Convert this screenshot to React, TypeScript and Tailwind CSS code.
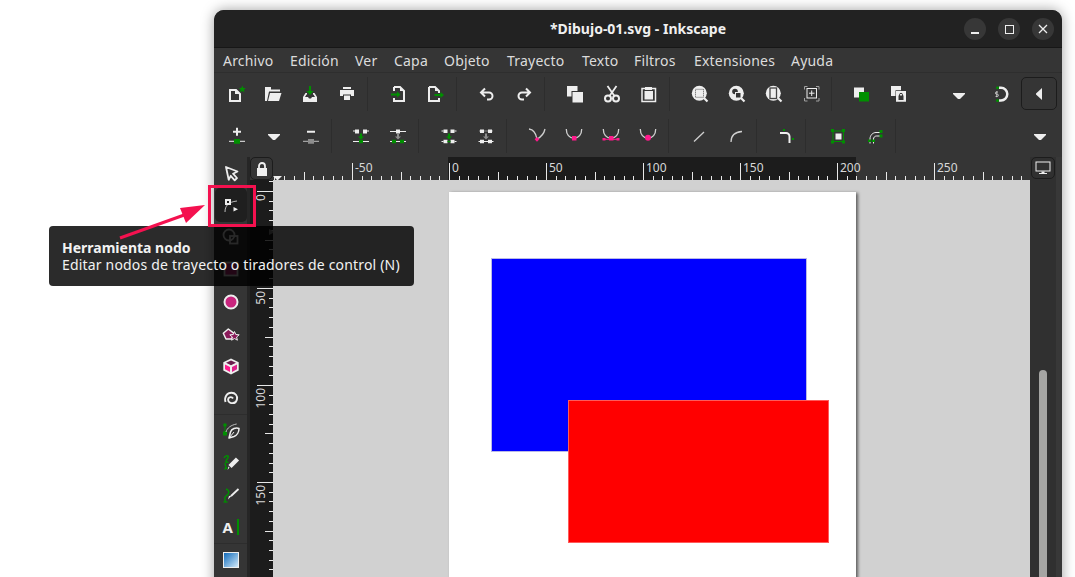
import type { ReactNode } from "react";

const G = "#008f00";
const P = "#ff1a8c";
const W = "#eeeeee";

function Ico({ children }: { children: ReactNode }) {
  return (
    <svg width="24" height="24" viewBox="0 0 24 24" fill="none" className="block shrink-0">
      {children}
    </svg>
  );
}

function Btn({ children }: { children: ReactNode }) {
  return (
    <button type="button" className="w-[37px] h-[34px] shrink-0 pl-[6px] pt-[6px] flex items-start justify-start">
      <Ico>{children}</Ico>
    </button>
  );
}

function Sep({ className }: { className: string }) {
  return (
    <div className={`h-[34px] shrink-0 pl-[1px] ${className}`}>
      <div className="w-px h-full bg-[#2d2d2d]" />
    </div>
  );
}

const Drop = () => <path d="M6 10h12v1l-5 5h-2l-5-5z" fill={W} />;

function UCurve() {
  return <path d="M4.300 5c0 5.500 3 9.300 7.700 9.300s7.700-3.800 7.700-9.300" stroke="#cfcfcf" strokeWidth="1.300" />;
}

function Lens({ children }: { children: ReactNode }) {
  return (
    <>
      <circle cx="11.3" cy="10.3" r="7.5" fill={W} />
      <path d="M16 15l3.500 3.500" stroke={W} strokeWidth="2.200" />
      {children}
    </>
  );
}

function Toolbar1() {
  return (
    <div className="h-[43px] flex items-start pt-[4px] pl-[4px] pr-[5px] bg-[#353535]">
      <Btn>
        <path d="M6 7h6l4 4v7H6z" stroke={W} strokeWidth="2" />
        <path d="M11 6l5 5h-5z" fill={W} />
        <path d="M18.300 2.500l1 2.400 2.400.2-1.800 1.700.6 2.500-2.200-1.300-2.200 1.300.6-2.500-1.800-1.700 2.400-.2z" fill={G} />
      </Btn>
      <Btn>
        <path d="M4 4h6v2.500h9v2H8l-2 9.500H4z" fill={W} />
        <path d="M9 10h11.500l-2.500 8H7z" fill={W} />
      </Btn>
      <Btn>
        <path d="M5 14l2.500-4H9v1.500h-.5L7 14h3l1 1.500h2l1-1.500h3l-1.500-2.500H15V10h1.500L19 14v5H5z" fill={W} />
        <path d="M11 3h2v5h2.500L12 12 8.500 8H11z" fill={G} />
      </Btn>
      <Btn>
        <path d="M8 4h8v2H8zM5 7h14v6h-3v-1.500H8V13H5zM9 12.500h6V17H9z" fill={W} />
      </Btn>
      <Sep className="w-[15px]" />
      <Btn>
        <path d="M7 4h6l4 4v10H7V15M7 8V4" stroke={W} strokeWidth="2" />
        <path d="M13 4l4 4h-4z" fill={W} />
        <path d="M4 10.500h6V8.500l3.500 3-3.500 3v-2H4z" fill={G} />
      </Btn>
      <Btn>
        <path d="M5 4h6l4 4v2M15 15v3H5V4" stroke={W} strokeWidth="2" />
        <path d="M11 4l4 4h-4z" fill={W} />
        <path d="M10.500 11h6V9l3.500 3-3.500 3v-2h-6z" fill={G} />
      </Btn>
      <Sep className="w-[14px]" />
      <Btn>
        <path d="M10 5.500l-4 4 4 4M6 9.500h8a3.500 3.500 0 0 1 0 7h-2" stroke={W} strokeWidth="2" />
      </Btn>
      <Btn>
        <path d="M14 5.500l4 4-4 4M18 9.500h-8a3.500 3.500 0 0 0 0 7h2" stroke={W} strokeWidth="2" />
      </Btn>
      <Sep className="w-[14px]" />
      <Btn>
        <path d="M4 3h10.500v10.500H4z" fill={W} />
        <path d="M8.500 8h12v12h-12z" fill="#353535" />
        <path d="M9.500 9h10.500v10.500H9.500z" fill={W} />
      </Btn>
      <Btn>
        <circle cx="8" cy="15.500" r="3" stroke={W} strokeWidth="2" />
        <circle cx="16" cy="15.500" r="3" stroke={W} strokeWidth="2" />
        <path d="M9.500 13L16.500 3M14.500 13L7.500 3" stroke={W} strokeWidth="1.800" />
      </Btn>
      <Btn>
        <rect x="5" y="5.500" width="13.500" height="13" stroke={W} strokeWidth="1.500" />
        <path d="M8 4h7v3H8zM7.500 8h8.500v8.500H7.500z" fill={W} />
      </Btn>
      <Sep className="w-[14px]" />
      <Btn>
        <Lens>
          <rect x="7.500" y="6.300" width="8" height="8" stroke="#555" strokeDasharray="1 1" />
        </Lens>
      </Btn>
      <Btn>
        <Lens>
          <circle cx="10" cy="8.500" r="2.800" fill="#353535" />
          <rect x="10.500" y="9.500" width="5.500" height="5.500" fill="#353535" stroke={W} />
        </Lens>
      </Btn>
      <Btn>
        <Lens>
          <rect x="8" y="5" width="6.500" height="10.500" stroke="#444" strokeWidth="1.300" />
        </Lens>
      </Btn>
      <Btn>
        <path d="M5.500 6.500v-3h3M17 3.500h3v3M20 15v3h-3M8.500 18h-3v-3" stroke="#a0a0a0" />
        <rect x="8" y="5.500" width="9.500" height="9.500" stroke={W} />
        <path d="M12.700 7.500v5.500M10 10.200h5.500" stroke={W} />
      </Btn>
      <Sep className="w-[14px]" />
      <Btn>
        <path d="M4 4.500h10v10H4z" fill={W} />
        <path d="M9 9h10v9.500H9z" fill={G} />
      </Btn>
      <Btn>
        <path d="M4 3h10v10H4z" fill={W} />
        <path d="M8.500 7.200h11v12h-11z" fill="#353535" />
        <path d="M9 8h10v10.700H9z" fill={W} />
        <path d="M11.500 12.500h5v4.500h-5z" fill="#353535" />
        <path d="M12.500 13v-1.200a1.500 1.500 0 0 1 3 0V13" stroke="#353535" />
      </Btn>
      <div className="ml-auto flex items-start">
        <div className="mr-[6px]">
          <Btn>
            <Drop />
          </Btn>
        </div>
        <Btn>
          <path d="M9 4.800h2a6.300 6.300 0 0 1 0 12.600H9" stroke={W} strokeWidth="2.500" />
          <rect x="6" y="3.300" width="3" height="3" rx="1.500" fill={G} />
          <rect x="6" y="15.900" width="3" height="3" rx="1.500" fill={G} />
          <path d="M8 9H6.500a1 1 0 0 0 0 2.200h.8a1 1 0 0 1 0 2.200H5.500M6.800 8.200v6" stroke={W} strokeWidth=".7" />
        </Btn>
        <button type="button" className="w-[36px] h-[33px] flex items-center justify-center rounded-[5px] border border-[#1c1c1c]">
          <svg width="8" height="12" viewBox="0 0 8 12" className="block">
            <path d="M7 0v12L1 6.500v-1z" fill={W} />
          </svg>
        </button>
      </div>
    </div>
  );
}

function Toolbar2() {
  return (
    <div className="h-[41px] flex items-start pt-[2px] pl-[5px] pr-[3px] bg-[#353535]">
      <Btn>
        <path d="M12 3.700v8M8 7.700h8" stroke={W} strokeWidth="2" />
        <path d="M4 17.300h16" stroke={W} />
        <path d="M9 15h6v4.700H9z" fill={G} />
      </Btn>
      <Btn>
        <Drop />
      </Btn>
      <Btn>
        <path d="M8 7.700h8" stroke={W} strokeWidth="2" />
        <path d="M4 17.300h16" stroke="#bdbdbd" />
        <path d="M9 15h6v4.700H9z" fill="#8d8d8d" />
      </Btn>
      <Sep className="w-[13px] mt-[1px]" />
      <Btn>
        <path d="M6 5.500h4v4H6zM14 5.500h4v4h-4z" fill={W} />
        <path d="M4 7h2M18 7h2M4 17.500h16" stroke={W} />
        <path d="M11 9.500h2v3h2l-3 3-3-3h2z" fill={G} />
        <path d="M10 15.700h4v3.600h-4z" fill={G} />
      </Btn>
      <Btn>
        <path d="M4 7.500h16" stroke={W} />
        <path d="M10 5.500h4v4h-4z" fill={W} />
        <path d="M11 9.500h2v3h2l-3 3-3-3h2z" fill="#8d8d8d" />
        <path d="M4 17.500h16" stroke={W} />
        <path d="M6 15.700h4v3.600H6zM14 15.700h4v3.600h-4z" fill={G} />
      </Btn>
      <Sep className="w-[14px] mt-[1px]" />
      <Btn>
        <path d="M6.500 5.500h4v3.500h-4zM13.500 5.500h4V9h-4z" fill={W} />
        <path d="M4.500 7h2M17.500 7h2M4.500 17.500h2M17.500 17.500h2" stroke={W} />
        <path d="M11 9.500h2v3h2l-3 3-3-3h2z" fill={G} />
        <path d="M6.500 15.700h4v3.600h-4zM13.500 15.700h4v3.600h-4z" fill={W} />
        <path d="M10.500 17.500h3" stroke={G} strokeWidth="1.500" />
      </Btn>
      <Btn>
        <path d="M5 7h14" stroke="#8d8d8d" />
        <path d="M6 5.500h4v3.500H6zM14 5.500h4V9h-4z" fill={W} />
        <path d="M11 9.500h2v3h2l-3 3-3-3h2z" fill="#8d8d8d" />
        <path d="M4.500 17.500h15" stroke={W} />
        <path d="M6 15.700h4v3.600H6zM14 15.700h4v3.600h-4z" fill={W} />
      </Btn>
      <Sep className="w-[14px] mt-[1px]" />
      <Btn>
        <path d="M4 5c4 .5 7 4.500 8 10M20 5c-1 4.500-4 8-8 10" stroke="#cfcfcf" strokeWidth="1.300" />
        <path d="M12 12.900l2.400 2.400-2.400 2.400-2.400-2.400z" fill={P} />
      </Btn>
      <Btn>
        <UCurve />
        <rect x="10" y="12" width="4.500" height="4.500" fill={P} />
      </Btn>
      <Btn>
        <UCurve />
        <path d="M5 15.300h14" stroke={P} />
        <rect x="10" y="12" width="4.500" height="4.500" fill={P} />
        <rect x="3.500" y="14" width="3" height="2.500" fill={P} />
        <rect x="17.500" y="14" width="3" height="2.500" fill={P} />
      </Btn>
      <Btn>
        <UCurve />
        <circle cx="12" cy="13.700" r="3" fill={P} />
      </Btn>
      <Sep className="w-[14px] mt-[1px]" />
      <Btn>
        <path d="M7 17.500L17 8" stroke="#cfcfcf" strokeWidth="1.300" />
      </Btn>
      <Btn>
        <path d="M7 18c0-6 4-10 11-10.500" stroke="#cfcfcf" strokeWidth="1.300" />
      </Btn>
      <Sep className="w-[12px] mt-[1px]" />
      <Btn>
        <path d="M7 9h6a3.500 3.500 0 0 1 3.500 3.500V19" stroke={W} strokeWidth="2" />
        <rect x="10" y="5" width="2" height="2" fill={G} />
        <rect x="19" y="14" width="2" height="2" fill={G} />
      </Btn>
      <Sep className="w-[16px] mt-[1px]" />
      <Btn>
        <rect x="7" y="7" width="10.500" height="10.500" stroke={G} />
        <path d="M5 5h3v3H5zM16 5h3v3h-3zM5 16.500h3v3H5zM16 16.500h3v3h-3z" fill={G} />
        <path d="M9.500 9.500h6v6h-6z" fill={W} />
      </Btn>
      <Btn>
        <path d="M7 19.500V15c0-4 3-6.500 6-6.500h5M10.500 19.500V15c0-1.500 1.200-3 3-3H18" stroke={W} />
        <path d="M5 15.500h3v2.500H5zM9 15.500h3v2.500H9zM16.500 6h3v3h-3zM16.500 10.500h3v3h-3z" fill={G} />
      </Btn>
      <Sep className="w-[12px] mt-[1px]" />
      <div className="ml-auto">
        <Btn>
          <Drop />
        </Btn>
      </div>
    </div>
  );
}

function Tool({ children, active }: { children: ReactNode; active?: boolean }) {
  return (
    <button
      type="button"
      className={
        active
          ? "w-[32px] h-[34px] -my-px py-[5px] px-[4px] ml-px rounded-[5px] bg-[#1f1f1f] shrink-0"
          : "w-[32px] h-[32px] p-[4px] ml-px shrink-0"
      }
    >
      <Ico>{children}</Ico>
    </button>
  );
}

function ToolSep() {
  return <div className="h-px w-full bg-[#2d2d2d] shrink-0" />;
}

function Sidebar() {
  return (
    <div className="w-[33px] flex flex-col shrink-0 bg-[#353535] overflow-hidden">
      <Tool>
        <path d="M7 6l11.500 4.500-4.500 2.200 4 4.300-2.300 2.300-4-4.500-2 4z" stroke={W} strokeWidth="1.800" strokeLinejoin="round" />
      </Tool>
      <Tool active>
        <path d="M6 19c0-6 3-10 12-11" stroke="#bdbdbd" />
        <rect x="6" y="6" width="6" height="6" fill={W} />
        <rect x="8" y="8" width="2" height="2" fill="#1f1f1f" />
        <path d="M14.500 14l4.500 2.200-4.500 2.200z" fill={W} />
      </Tool>
      <Tool>
        <circle cx="10" cy="10" r="5.500" stroke={W} strokeWidth="1.800" />
        <rect x="11" y="11" width="7.500" height="7.500" stroke={W} strokeWidth="1.800" />
      </Tool>
      <Tool>
        <rect x="5.500" y="5.500" width="13" height="13" fill="#c9257e" stroke={W} strokeWidth="1.800" />
      </Tool>
      <ToolSep />
      <Tool>
        <circle cx="12" cy="12" r="6.500" fill="#c9257e" stroke={W} strokeWidth="2" />
      </Tool>
      <Tool>
        <path d="M9.300 7L15 11.300 12.700 17H7L4.300 11.300z" fill="#8a1a5a" stroke={W} strokeWidth="1.500" strokeLinejoin="round" />
        <path d="M15.500 9.500l1.300 3 3.400.3-2.600 2.200.8 3.200-2.900-1.700-2.900 1.700.8-3.200-2.600-2.200 3.400-.3z" fill="#8a1a5a" stroke={W} strokeLinejoin="round" />
      </Tool>
      <Tool>
        <path d="M12 4.500l7.700 3.700v8.300L12 20.500l-7.700-4V8.200z" fill={W} />
        <path d="M12 6.500l5 2.300-5 2.500-5-2.500z" fill="#6a1b4d" />
        <path d="M6 10.500l5 2.500v5l-5-2.800z" fill="#ff1a8c" />
        <path d="M18 10.500l-5 2.500v5l5-2.800z" fill="#e0208c" />
      </Tool>
      <Tool>
        <path d="M6.500 16C5 11 8 6.800 12.500 6.800c4 0 6 3.200 5.500 6.200-.5 3-3 4.500-6 4-2.500-.5-3.500-3-2.500-4.700 1-1.600 3.500-1.600 4.500.2" stroke={W} strokeWidth="1.900" />
      </Tool>
      <ToolSep />
      <Tool>
        <path d="M6 6v8" stroke={G} />
        <circle cx="6" cy="6" r="1.800" fill={G} />
        <rect x="4" y="12.500" width="4" height="4" fill={G} />
        <path d="M7 13C8 9 12 6 17.700 5" stroke="#bdbdbd" />
        <path d="M10 19l1.500-6c1-3 5.500-5 8.500-3.500 0 3.500-2 7-5 8z" stroke={W} strokeWidth="1.500" strokeLinejoin="round" />
        <path d="M10.500 18.500L15 13" stroke={W} />
      </Tool>
      <Tool>
        <path d="M5 7c2-3.500 6-2.500 3.500 .5C6.500 10 6 12 9.500 11M6.500 12c-1 1.500 0 3 1 3" stroke={G} strokeWidth="1.500" />
        <path d="M5 19l1.500-4 2.500 2.500z" fill={G} />
        <path d="M18.500 8l-7.500 7.500" stroke={W} strokeWidth="4.500" />
        <path d="M10.500 16.500l-2 2.500 1-3.500z" fill={W} />
      </Tool>
      <Tool>
        <path d="M7 6c4 1.500 3.500 5 0 7-3 2 0 3-1 6" stroke={G} strokeWidth="1.500" />
        <path d="M4.500 19h4" stroke={G} strokeWidth="1.300" />
        <path d="M19.500 6L12 13" stroke={W} strokeWidth="1.800" />
        <path d="M13 12.500L9 16.500l1-3.500z" fill={W} />
      </Tool>
      <Tool>
        <text x="3.500" y="18" fontSize="15" fontWeight="700" fill={W}>
          A
        </text>
        <rect x="18" y="4" width="2" height="16" fill={G} />
      </Tool>
      <ToolSep />
      <Tool>
        <defs>
          <linearGradient id="grad" x1="0" y1="0" x2="1" y2="1">
            <stop offset="0" stopColor="#0a66b8" />
            <stop offset="1" stopColor="#d8eefc" />
          </linearGradient>
        </defs>
        <rect x="4.500" y="4.500" width="15" height="15" fill="url(#grad)" stroke={W} />
      </Tool>
    </div>
  );
}

function TopRuler() {
  const ticks = Array.from({ length: 78 }, (_, i) => i - 18);
  const labels = [-50, 0, 50, 100, 150, 200, 250];
  return (
    <svg width="757" height="23" className="block">
      <rect width="757" height="23" fill="#353535" />
      <rect x="175" width="408" height="23" fill="#1c1c1c" />
      {ticks.map((i) => {
        const x = Math.round(176 + i * 9.7) + 0.5;
        const top = i % 10 === 0 ? 6 : i % 5 === 0 ? 15 : 19;
        return <line key={i} x1={x} x2={x} y1={top} y2={23} stroke="#e8e8e8" />;
      })}
      {labels.map((n) => (
        <text key={n} x={176 + n * 1.94 + 3} y={15} fontSize="12" fill="#d8d8d8">
          {n}
        </text>
      ))}
      <path d="M0 19h9l-4 4H4z" fill="#eeeeee" />
    </svg>
  );
}

function LeftRuler() {
  const ticks = Array.from({ length: 41 }, (_, i) => i - 1);
  const labels = [0, 50, 100, 150];
  return (
    <svg width="23" height="410" className="block shrink-0">
      <rect width="23" height="410" fill="#1c1c1c" />
      {ticks.map((i) => {
        const y = Math.round(11 + i * 9.7) + 0.5;
        const left = i % 10 === 0 ? 7 : i % 5 === 0 ? 15 : 19;
        return <line key={i} x1={left} x2={23} y1={y} y2={y} stroke="#e8e8e8" />;
      })}
      {labels.map((n) => (
        <text
          key={n}
          transform={`translate(15 ${11 + n * 1.94 + 3}) rotate(-90)`}
          textAnchor="end"
          fontSize="12"
          fill="#d8d8d8"
        >
          {n}
        </text>
      ))}
      <path d="M19 49l6 3-6 3z" fill="#888" />
    </svg>
  );
}

export default function App() {
  const menus = [
    ["Archivo", "w-[67px]"],
    ["Edición", "w-[65px]"],
    ["Ver", "w-[39px]"],
    ["Capa", "w-[50px]"],
    ["Objeto", "w-[63px]"],
    ["Trayecto", "w-[75px]"],
    ["Texto", "w-[52px]"],
    ["Filtros", "w-[60px]"],
    ["Extensiones", "w-[97px]"],
    ["Ayuda", "w-[60px]"],
  ];

  return (
    <div className="relative w-[1075px] h-[577px] overflow-hidden bg-white pl-[214px] pt-[10px] font-['Noto_Sans',sans-serif] text-[14px]">
      <div className="w-[848px] h-[600px] flex flex-col rounded-t-[10px] bg-[#353535] shadow-[0_0_13px_rgba(0,0,0,0.38)] overflow-hidden">
        <div className="relative h-[38px] shrink-0 flex items-center justify-center bg-[#222222] border-b border-[#171717]">
          <span className="font-bold text-[#f0f0f0]">*Dibujo-01.svg - Inkscape</span>
          <div className="absolute right-[8px] top-[8px] flex gap-[12px]">
            <div className="w-[22px] h-[22px] rounded-full bg-[#373737] flex items-center justify-center">
              <div className="w-[8px] h-[2px] mt-[8px] bg-[#eeeeee]" />
            </div>
            <div className="w-[22px] h-[22px] rounded-full bg-[#373737] flex items-center justify-center">
              <div className="w-[9px] h-[9px] border border-[#eeeeee]" />
            </div>
            <div className="w-[22px] h-[22px] rounded-full bg-[#373737] flex items-center justify-center">
              <svg width="10" height="10" viewBox="0 0 10 10" className="block">
                <path d="M1 1l8 8M9 1L1 9" stroke="#eeeeee" strokeWidth="1.300" />
              </svg>
            </div>
          </div>
        </div>

        <div className="h-[25px] shrink-0 flex items-center pl-[9px] bg-[#353535] border-b border-[#2e2e2e] text-[#dcdcdc] tracking-[.2px]">
          {menus.map(([label, width]) => (
            <span key={label} className={`${width} shrink-0`}>
              {label}
            </span>
          ))}
        </div>

        <Toolbar1 />
        <Toolbar2 />

        <div className="flex-1 flex min-h-0 overflow-hidden">
          <Sidebar />
          <div className="w-[3px] shrink-0 bg-[#262626]" />
          <div className="w-[780px] shrink-0 flex flex-col">
            <div className="h-[23px] flex shrink-0">
              <button type="button" className="w-[23px] h-[23px] shrink-0 rounded-[5px] border border-[#1c1c1c] flex items-center justify-center">
                <svg width="12" height="14" viewBox="0 0 12 14" className="block">
                  <path d="M1 6h10v8H1z" fill="#f0f0f0" />
                  <path d="M3 6V4a3 3 0 0 1 6 0v2" stroke="#f0f0f0" strokeWidth="1.800" fill="none" />
                </svg>
              </button>
              <TopRuler />
            </div>
            <div className="flex flex-1">
              <LeftRuler />
              <div className="relative flex-1 bg-[#d1d1d1]">
                <div className="absolute left-[176px] top-[12px] w-[407px] h-[500px] bg-white shadow-[2px_1px_3px_rgba(0,0,0,0.55)]" />
                <div className="absolute left-[218px] top-[78px] w-[316px] h-[194px] bg-[#0000ff] border border-[#b9b9e6]" />
                <div className="absolute left-[295px] top-[220px] w-[261px] h-[143px] bg-[#ff0000] border border-[#ff5a5a]" />
              </div>
            </div>
          </div>
          <div className="flex-1 bg-[#303030] relative">
            <button type="button" className="absolute left-[1px] top-0 w-[24px] h-[22px] rounded-[5px] border border-[#1c1c1c] flex items-center justify-center">
              <svg width="16" height="14" viewBox="0 0 16 14" className="block">
                <rect x="1" y="1" width="14" height="9" stroke="#eeeeee" fill="none" />
                <path d="M6.500 10.500h3V12h-3zM4 12h8v1H4z" fill="#eeeeee" />
              </svg>
            </button>
            <div className="absolute left-[9px] top-[213px] w-[8px] h-[300px] rounded-t-full bg-[#a5a5a3]" />
            <div className="absolute right-0 top-0 bottom-0 w-[6px] bg-[#383838]" />
          </div>
        </div>
      </div>

      <div className="absolute left-[49px] top-[226px] w-[365px] h-[60px] rounded-[4px] bg-black/[.83] pl-[13px] pt-[13px] text-[14px] leading-[17px] text-[#f2f2f2] tracking-[.18px]">
        <div className="font-bold tracking-normal">Herramienta nodo</div>
        <div className="whitespace-nowrap">Editar nodos de trayecto o tiradores de control (N)</div>
      </div>

      <div className="absolute left-[208px] top-[185px] w-[48px] h-[42px] border-[3px] border-[#f4114f]" />
      <svg width="100" height="50" viewBox="0 0 100 50" className="absolute left-[115px] top-[195px]">
        <path d="M5 43L72 19" stroke="#f4114f" strokeWidth="3" />
        <path d="M90 10L65 13L71 28z" fill="#f4114f" />
      </svg>
    </div>
  );
}
